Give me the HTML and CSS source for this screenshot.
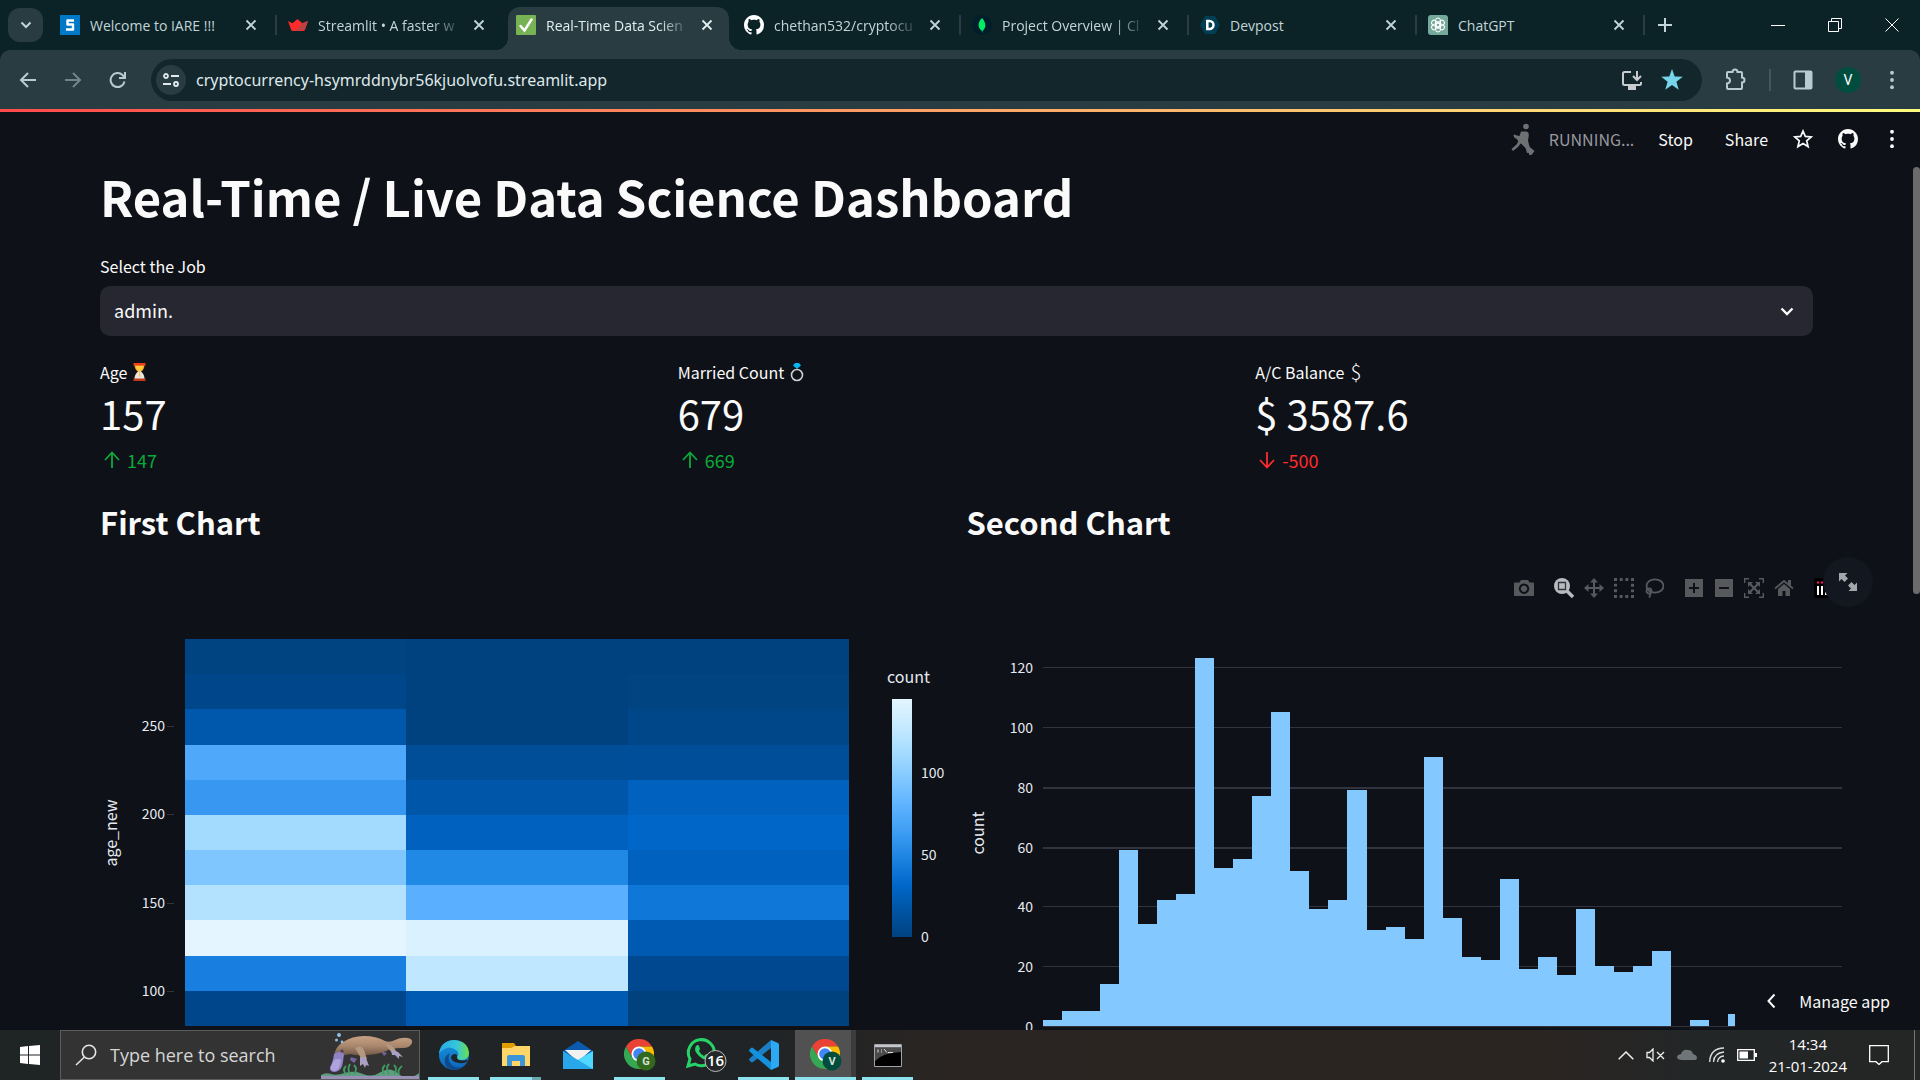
FILE: index.html
```
<!DOCTYPE html>
<html lang="en">
<head>
    <meta charset="UTF-8">
    <meta name="viewport" content="width=device-width, initial-scale=1.0">
    <title>Real-Time Data Science Dashboard</title>
    <link rel="stylesheet" href="styles.css">
</head>
<body>

    <svg class="defs" aria-hidden="true">
        <symbol id="close" viewBox="0 0 12 12"><path d="M1.5 1.5l9 9M10.5 1.5l-9 9" stroke="currentColor" stroke-width="1.8" fill="none"/></symbol>
        <symbol id="github" viewBox="0 0 16 16"><path fill="currentColor" d="M8 0C3.58 0 0 3.58 0 8c0 3.54 2.29 6.53 5.47 7.59.4.07.55-.17.55-.38 0-.19-.01-.82-.01-1.49-2.01.37-2.53-.49-2.69-.94-.09-.23-.48-.94-.82-1.13-.28-.15-.68-.52-.01-.53.63-.01 1.08.58 1.23.82.72 1.21 1.87.87 2.33.66.07-.52.28-.87.51-1.07-1.78-.2-3.64-.89-3.64-3.95 0-.87.31-1.59.82-2.15-.08-.2-.36-1.02.08-2.12 0 0 .67-.21 2.2.82.64-.18 1.32-.27 2-.27s1.36.09 2 .27c1.53-1.04 2.2-.82 2.2-.82.44 1.1.16 1.92.08 2.12.51.56.82 1.27.82 2.15 0 3.07-1.87 3.75-3.65 3.95.29.25.54.73.54 1.48 0 1.07-.01 1.93-.01 2.2 0 .21.15.46.55.38A8.01 8.01 0 0016 8c0-4.42-3.58-8-8-8z"/></symbol>
        <symbol id="dots" viewBox="0 0 20 20"><g fill="currentColor"><circle cx="10" cy="2" r="2.1"/><circle cx="10" cy="10" r="2.1"/><circle cx="10" cy="18" r="2.1"/></g></symbol>
        <symbol id="chrome" viewBox="0 0 30 30">
            <path fill="#ea4335" d="M15 15V7.5h13A15 15 0 0 0 2 7.5l6.5 11.2z"/>
            <path fill="#fbbc04" d="M28 7.5H15l6.5 11.3L15 30A15 15 0 0 0 28 7.5z"/>
            <path fill="#34a853" d="M2 7.5A15 15 0 0 0 15 30l6.5-11.3H8.5z"/>
            <circle cx="15" cy="15" r="7.5" fill="#fff"/><circle cx="15" cy="15" r="5.8" fill="#4285f4"/>
        </symbol>
        <symbol id="up" viewBox="0 0 18 18"><path d="M9 17V2M2 9l7-7.500 7 7.500" stroke="currentColor" stroke-width="1.8" fill="none"/></symbol>
    </svg>

    <!-- browser window -->
    <div class="tab-strip">
        <button class="tab-search" aria-label="Search tabs">
            <svg width="12" height="8" viewBox="0 0 12 8"><path d="M1.500 1.500L6 6l4.500-4.500" stroke="currentColor" stroke-width="2" fill="none"/></svg>
        </button>
        <div class="tabs">
            <div class="tab">
                <svg class="favicon" viewBox="0 0 20 20"><path fill="#0078c8" d="M0 0h20v20H0z"/><path d="M14 5.500H7.500v4h5.500v5H6" fill="none" stroke="#fff" stroke-width="2.400" stroke-linejoin="round"/></svg>
                <span class="tab-title">Welcome to IARE !!!</span>
                <button class="tab-close" aria-label="Close tab"><svg><use href="#close"/></svg></button>
            </div>
            <div class="tab">
                <svg class="favicon" viewBox="0 0 20 20"><path fill="#ff2b2b" d="M0 6l4.500 2.200 5-4.200 4.800 4.300L20 6l-3 8.500q-.5 1.500-2 1.500H5q-1.500 0-2-1.500z"/><path fill="#bd4043" d="M14.300 8.300L20 6l-3 8.500L10 16H7z"/></svg>
                <span class="tab-title faded">Streamlit • A faster w</span>
                <button class="tab-close" aria-label="Close tab"><svg><use href="#close"/></svg></button>
            </div>
            <div class="tab active">
                <svg class="favicon" viewBox="0 0 20 20"><rect width="20" height="20" rx="1" fill="#77b255"/><path d="M4.500 11l4 4.500L15.500 4.500" fill="none" stroke="#fff" stroke-width="2.500" stroke-linecap="round"/></svg>
                <span class="tab-title faded">Real-Time Data Scien</span>
                <button class="tab-close" aria-label="Close tab"><svg><use href="#close"/></svg></button>
            </div>
            <div class="tab">
                <svg class="favicon white"><use href="#github"/></svg>
                <span class="tab-title faded">chethan532/cryptocu</span>
                <button class="tab-close" aria-label="Close tab"><svg><use href="#close"/></svg></button>
            </div>
            <div class="tab">
                <svg class="favicon" viewBox="0 0 20 20"><circle cx="10" cy="10" r="10" fill="#001e2b"/><path fill="#00ed64" d="M10 3c-5 5-4 10 0 13v1.500h.4V16c4-3 4-8-.4-13z"/></svg>
                <span class="tab-title faded">Project Overview | Cl</span>
                <button class="tab-close" aria-label="Close tab"><svg><use href="#close"/></svg></button>
            </div>
            <div class="tab">
                <svg class="favicon" viewBox="0 0 20 20"><path fill="#003e54" d="M5 1h10l5 9-5 9H5l-5-9z"/><path d="M7.300 6h2.200a4 4 0 0 1 0 8H7.300z" fill="none" stroke="#fff" stroke-width="2.500"/></svg>
                <span class="tab-title">Devpost</span>
                <button class="tab-close" aria-label="Close tab"><svg><use href="#close"/></svg></button>
            </div>
            <div class="tab">
                <svg class="favicon" viewBox="0 0 20 20"><path fill="#75a99c" d="M3 0h14a3 3 0 0 1 3 3v17H3a3 3 0 0 1-3-3V3a3 3 0 0 1 3-3z"/><g fill="none" stroke="#fff" stroke-width="1"><rect id="petal" x="7.500" y="3" width="5" height="9" rx="2.500"/><use href="#petal" transform="rotate(60 10 10)"/><use href="#petal" transform="rotate(120 10 10)"/><use href="#petal" transform="rotate(180 10 10)"/><use href="#petal" transform="rotate(240 10 10)"/><use href="#petal" transform="rotate(300 10 10)"/></g></svg>
                <span class="tab-title">ChatGPT</span>
                <button class="tab-close" aria-label="Close tab"><svg><use href="#close"/></svg></button>
            </div>
            <button class="new-tab" aria-label="New tab"><svg width="14" height="14" viewBox="0 0 14 14"><path d="M7 0v14M0 7h14" stroke="currentColor" stroke-width="2"/></svg></button>
        </div>
        <div class="window-controls">
            <button aria-label="Minimize"><svg width="14" height="14" viewBox="0 0 14 14"><path d="M0 7.500h14" stroke="#fff"/></svg></button>
            <button aria-label="Restore"><svg width="14" height="14" viewBox="0 0 14 14"><path d="M.5 3.500h10v10H.5zM3.500 3V.500h10v10H11" stroke="#fff" fill="none"/></svg></button>
            <button aria-label="Close"><svg width="14" height="14" viewBox="0 0 14 14"><path d="M.5.500l13 13M13.500.500l-13 13" stroke="#fff"/></svg></button>
        </div>
    </div>

    <div class="toolbar">
        <div class="nav-buttons">
            <button aria-label="Back"><svg width="18" height="18" viewBox="0 0 18 18"><path d="M17 9H2.500M9 2L2 9l7 7" stroke="currentColor" stroke-width="2" fill="none"/></svg></button>
            <button aria-label="Forward" class="disabled"><svg width="18" height="18" viewBox="0 0 18 18"><path d="M1 9h14.500M9 2l7 7-7 7" stroke="currentColor" stroke-width="2" fill="none"/></svg></button>
            <button aria-label="Reload"><svg width="18" height="18" viewBox="0 0 18 18"><path d="M15.500 10.500A7 7 0 1 1 13.500 4L16 6.500M16 1v6H10" stroke="currentColor" stroke-width="2" fill="none"/></svg></button>
        </div>
        <div class="address-bar">
            <button class="site-info" aria-label="Site information"><svg width="16" height="16" viewBox="0 0 16 16"><g stroke="currentColor" stroke-width="1.800" fill="none"><circle cx="3" cy="4" r="2"/><path d="M8 4h8M0 12h8"/><circle cx="13" cy="12" r="2"/></g></svg></button>
            <input class="url" type="text" aria-label="Address" value="cryptocurrency-hsymrddnybr56kjuolvofu.streamlit.app">
            <button aria-label="Install app"><svg width="22" height="22" viewBox="0 0 22 22"><path d="M10 3H3.500Q2 3 2 4.500v10Q2 16 3.500 16h15q1.500 0 1.500-1.500V13M16 2v8M12 7l4 4 4-4" fill="none" stroke="#c7cdcf" stroke-width="2"/><path fill="#c7cdcf" d="M7 17h8v4H7z"/></svg></button>
            <button aria-label="Bookmark"><svg width="22" height="22" viewBox="0 0 22 22"><path fill="#76d5e8" d="M11 0l2.700 7.600 8.100.2-6.400 5 2.300 7.900L11 16.100l-6.700 4.600 2.300-7.900-6.400-5 8.100-.2z"/></svg></button>
        </div>
        <div class="browser-actions">
            <button aria-label="Extensions"><svg width="24" height="24" viewBox="0 0 24 24"><path d="M5 4h4.500a2.500 2.500 0 0 1 5 0H18q1 0 1 1v4.500a2.500 2.500 0 0 1 0 5V20q0 1-1 1H5q-1 0-1-1v-4.500q3-.3 3-3t-3-3V5q0-1 1-1z" fill="none" stroke="currentColor" stroke-width="2"/></svg></button>
            <span class="divider"></span>
            <button aria-label="Side panel"><svg width="20" height="20" viewBox="0 0 20 20"><rect x="1.500" y="1.500" width="17" height="17" rx="1" fill="none" stroke="currentColor" stroke-width="2"/><path d="M12 1h7v18h-7z" fill="currentColor"/></svg></button>
            <button aria-label="Profile"><span class="profile">V</span></button>
            <button aria-label="Chrome menu"><svg width="18" height="18"><use href="#dots"/></svg></button>
        </div>
    </div>

    <!-- streamlit page -->
    <div class="app">
        <div class="decoration"></div>
        <header class="app-header">
            <svg width="24" height="32" viewBox="0 0 24 32"><g fill="#6f7074"><circle cx="15" cy="3.500" r="2.800"/><path d="M10 8.500h5q3 0 2.800 4l-.8 5 1.500 6 .5 6-3 .5-2-7-4-3-3 4-5 4-1.500-2L6 21l2-5-5-1.500.500-2.500 5 1z"/></g><path d="M3 12l14 14" stroke="#6f7074" stroke-width="2"/><path d="M15 24l2-1.500 6.500 5.500-3 4h-2z" fill="#6f7074"/></svg>
            <span class="running">RUNNING...</span>
            <button>Stop</button>
            <button class="share">Share</button>
            <button aria-label="Favorite"><svg width="20" height="20" viewBox="0 0 20 20"><path d="M10 2l2.300 5.400 5.900.5-4.500 3.900 1.400 5.800L10 14.500l-5.100 3.100 1.400-5.800-4.500-3.900 5.900-.5z" fill="none" stroke="currentColor" stroke-width="1.700"/></svg></button>
            <button aria-label="View source"><svg width="20" height="20"><use href="#github"/></svg></button>
            <button aria-label="Main menu"><svg width="18" height="18"><use href="#dots"/></svg></button>
        </header>

        <main class="content">
            <h1>Real-Time / Live Data Science Dashboard</h1>

            <label class="select-label" for="job">Select the Job</label>
            <div class="select-box">
                <select id="job">
                    <option>admin.</option>
                    <option>technician</option>
                    <option>services</option>
                </select>
                <svg class="select-arrow" width="14" height="9" viewBox="0 0 14 9"><path d="M1.500 1.500L7 7l5.500-5.500" stroke="#fafafa" stroke-width="2.400" fill="none"/></svg>
            </div>

            <div class="metrics">
                <div class="metric">
                    <p class="metric-label">Age
                        <svg width="13" height="18" viewBox="0 0 13 18"><path fill="#f5a623" d="M1.500 2h10q0 4.500-4 7h-2q-4-2.500-4-7z"/><path fill="#ece5df" d="M5.500 8h2q4 3 4 8h-10q0-5 4-8z"/><path fill="#ffc83d" d="M2.500 3h8q-.5 3-3.300 5v6H6V8Q3 6 2.500 3z"/><path fill="#e8401c" d="M.5 0h12v2.500H.5z"/><path fill="#c33a17" d="M.5 15.500h12V18H.5z"/></svg>
                    </p>
                    <p class="metric-value">157</p>
                    <p class="metric-delta"><svg width="18" height="18"><use href="#up"/></svg>147</p>
                </div>
                <div class="metric">
                    <p class="metric-label">Married Count
                        <svg width="14" height="19" viewBox="0 0 14 19"><circle cx="7" cy="12" r="5.500" fill="none" stroke="#cfcfcf" stroke-width="1.600"/><path fill="#00b7f1" d="M5 0h4l2 2.500L7 6 3 2.500z"/></svg>
                    </p>
                    <p class="metric-value">679</p>
                    <p class="metric-delta"><svg width="18" height="18"><use href="#up"/></svg>669</p>
                </div>
                <div class="metric">
                    <p class="metric-label">A/C Balance <span class="dollar">$</span></p>
                    <p class="metric-value">$ 3587.6</p>
                    <p class="metric-delta down"><svg width="18" height="18"><use href="#up"/></svg>-500</p>
                </div>
            </div>

            <div class="charts">
                <section class="chart-col">
                    <h3>First Chart</h3>
                    <svg class="chart" id="heatmap" width="875" height="462" viewBox="0 0 875 462">
                        <linearGradient id="blues" x1="0" y1="0" x2="0" y2="1">
                            <stop offset="0" stop-color="#e4f5ff"/><stop offset=".11" stop-color="#c7ebff"/><stop offset=".22" stop-color="#a6dcff"/><stop offset=".33" stop-color="#83c9ff"/><stop offset=".44" stop-color="#60b4ff"/><stop offset=".56" stop-color="#3d9df3"/><stop offset=".67" stop-color="#1c83e1"/><stop offset=".78" stop-color="#0068c9"/><stop offset=".89" stop-color="#0054a3"/><stop offset="1" stop-color="#004280"/>
                        </linearGradient>
                        <rect x="792" y="132" width="20" height="238" fill="url(#blues)"/>
                        <text class="axis-title" x="787" y="116">count</text>
                        <text class="axis-title" text-anchor="middle" transform="translate(17 266) rotate(-90)">age_new</text>
                    </svg>
                </section>
                <section class="chart-col">
                    <h3>Second Chart</h3>
                    <svg class="chart" id="histogram" width="875" height="462" viewBox="0 0 875 462">
                        <text class="axis-title" text-anchor="middle" transform="translate(17 266) rotate(-90)">count</text>
                    </svg>
                    <div class="modebar">
                        <button aria-label="Download plot"><svg viewBox="0 0 20 20"><path fill-rule="evenodd" fill="currentColor" d="M1 4.500h4.500L7 2h7l1.500 2.500H19q1 0 1 1V17q0 1-1 1H1q-1 0-1-1V5.500q0-1 1-1zM10 5.500a5.200 5.200 0 1 0 .1 0zm0 2a3.200 3.200 0 1 1-.1 0z"/></svg></button>
                        <button aria-label="Zoom" class="group on"><svg viewBox="0 0 20 20"><circle cx="8" cy="8" r="8" fill="currentColor"/><path d="M12 12l7 7" stroke="currentColor" stroke-width="3.500"/><path d="M4.500 4.500h7v7h-7z" fill="none" stroke="#30333a" stroke-width="1.300"/></svg></button>
                        <button aria-label="Pan"><svg viewBox="0 0 20 20"><path d="M10 2v16M2 10h16" stroke="currentColor" stroke-width="2"/><path fill="currentColor" d="M10 0l4 4.500H6zM10 20l4-4.500H6zM0 10l4.500-4v8zM20 10l-4.500-4v8z"/></svg></button>
                        <button aria-label="Box select"><svg viewBox="0 0 20 20"><rect x="1.500" y="1.500" width="17" height="17" fill="none" stroke="currentColor" stroke-width="3" stroke-dasharray="2.900 2.767" stroke-dashoffset="1.400"/></svg></button>
                        <button aria-label="Lasso select"><svg viewBox="0 0 20 20"><g fill="none" stroke="currentColor" stroke-width="1.800"><ellipse cx="11" cy="8" rx="8.500" ry="6.700"/><circle cx="5" cy="13" r="2.500"/><path d="M6 15q1 2-1 4.500"/></g></svg></button>
                        <button aria-label="Zoom in" class="group"><svg viewBox="0 0 20 20"><path fill="currentColor" d="M1 1h18v18H1z"/><path d="M10 5v10M5 10h10" stroke="#0e1117" stroke-width="2"/></svg></button>
                        <button aria-label="Zoom out"><svg viewBox="0 0 20 20"><path fill="currentColor" d="M1 1h18v18H1z"/><path d="M5 10h10" stroke="#0e1117" stroke-width="2"/></svg></button>
                        <button aria-label="Autoscale"><svg viewBox="0 0 20 20"><path d="M.7 5V.7H5M15 .7h4.300V5M19.300 15v4.300H15M5 19.300H.7V15" fill="none" stroke="currentColor" stroke-width="1.400"/><path d="M5 5l10 10M15 5L5 15" stroke="currentColor" stroke-width="2"/><path fill="currentColor" d="M4 4h5L4 9zM16 4v5l-5-5zM16 16h-5l5-5zM4 16v-5l5 5z"/></svg></button>
                        <button aria-label="Reset axes"><svg viewBox="0 0 20 20"><path d="M1 10.500L10 3l9 7.500" fill="none" stroke="currentColor" stroke-width="1.800"/><path fill="currentColor" d="M14 2h3v6l-3-2.500zM4 11l6-5 6 5v7h-4.500v-5h-3v5H4z"/></svg></button>
                        <a class="group" href="#" aria-label="Produced with Plotly"><svg viewBox="0 0 20 20"><rect width="20" height="20" rx="2" fill="#000"/><g fill="#fff"><rect x="3" y="8" width="2" height="9"/><rect x="7" y="8" width="2" height="9"/><rect x="11" y="13" width="2" height="4"/></g><g fill="#e8195e"><circle cx="4" cy="4.500" r="1.200"/><circle cx="8" cy="4.500" r="1.200"/></g></svg></a>
                    </div>
                    <button class="fullscreen" aria-label="View fullscreen"><svg width="18" height="18" viewBox="0 0 18 18"><path fill="#a3a6ab" d="M0 0h8.500L6 2.500l3 3L5.500 9l-3-3L0 8.500zM18 18H9.500l2.500-2.500-3-3L12.500 9l3 3L18 9.500z"/></svg></button>
                </section>
            </div>
        </main>

        <div class="scrollbar"></div>
        <button class="manage-app"><svg width="9" height="16" viewBox="0 0 9 16"><path d="M7.500 1.500L1.500 8l6 6.500" stroke="currentColor" stroke-width="2" fill="none"/></svg>Manage app</button>
    </div>

    <!-- windows taskbar -->
    <footer class="taskbar">
        <button class="start" aria-label="Start"><svg width="20" height="20" viewBox="0 0 20 20"><path fill="#fff" d="M0 2l8-1v8.500H0zM9 .900L20 0v9.500H9zM0 10.500h8V19l-8-1zM9 10.500h11V20L9 19.100z"/></svg></button>
        <label class="search">
            <svg width="22" height="22" viewBox="0 0 22 22"><g stroke="#e6e6e6" stroke-width="1.600" fill="none"><circle cx="14" cy="8" r="6.700"/><path d="M9.500 13L1 21"/></g></svg>
            <input type="text" placeholder="Type here to search">
            <svg class="platypus" width="98" height="47" viewBox="0 0 98 47">
                <defs><linearGradient id="fur" x1="0" y1="0" x2="0" y2="1"><stop offset="0" stop-color="#c9a183"/><stop offset=".5" stop-color="#a9876d"/><stop offset="1" stop-color="#6e5645"/></linearGradient></defs>
                <path d="M0 43q5-3 10-1t14-1 18 1 18-2 18 2 20-1v6H0z" fill="#5f9c82"/><path d="M0 44h98v3H0z" fill="#9a8fb5"/>
                <g stroke="#3f9c61" stroke-width="1.800" fill="none"><path d="M25 42q-4-4 0-8M29 42q-3-5 0-10M33 42q4-5 0-9M63 42q-3-5 1-9M68 42q-4-6 0-10M73 42q4-5 0-9M78 42q-2-4 3-8"/></g>
                <path fill="#75629f" d="M30 25l6 2-3 4-4-3zM60 19l6 2-3 3z"/>
                <path fill="url(#fur)" d="M13 24q1-9 9-14 9-6 21-6 12 0 21 5 5 2 10-1 6-3 13-2 5 1 4 5-2 5-9 5-7 0-13 1-8 5-22 6-12 1-18-1-7 2-16 2z"/>
                <path fill="#8f82c6" d="M13 22q5-4 10 0l-1 8q-1 9-8 10-6 0-5-5 3-5 4-13z"/><path fill="#b0a3dc" d="M13 28q4-2 7 0-1 10-6 11-5 0-4-4z"/>
                <circle cx="21" cy="19" r="1.600" fill="#4d3e64"/>
                <path fill="#b59880" d="M34 16q6-4 9 2l3 9-6-1zM64 12q8 0 11 7l-4 2z"/>
                <path fill="#a9a0c4" d="M39 25l6 1 3 8-3-1-1 3-2-4-3 2zM70 17l7 3 5 5-4-1v3l-4-4h-3z"/>
                <g fill="#8fc0e8"><circle cx="18" cy="3" r="2"/><circle cx="15.500" cy="8" r="1.500"/><circle cx="21" cy="10" r="1.400"/></g>
            </svg>
        </label>
        <nav class="task-apps">
            <button class="open" aria-label="Edge"><svg width="30" height="30" viewBox="0 0 30 30"><defs><linearGradient id="edge-a"><stop offset="0" stop-color="#28a8ea"/><stop offset=".6" stop-color="#36c6d8"/><stop offset="1" stop-color="#6be04c"/></linearGradient><linearGradient id="edge-b" x1="0" y1="0" x2="0" y2="1"><stop offset="0" stop-color="#1b96dd"/><stop offset="1" stop-color="#0a65bd"/></linearGradient></defs><circle cx="15" cy="15" r="15" fill="url(#edge-b)"/><path fill="#114a8b" d="M10 15q-2 8 6 12 6 2 11-3-5 6-12 6Q4 28 6 18q1-3 5-5z"/><path fill="url(#edge-a)" d="M0 14Q1 1 15 0q14 1 15 13 0 6-7 7-6 0-5-3 3-4-1-7-7-5-13 0-3 2-4 4z"/><path fill="#212426" d="M18 17q0 5 10 3l1 1q-4 3-9 2-8-1-8-6 1-3 4-3 3 1 2 3z"/></svg></button>
            <button class="open stacked" aria-label="File Explorer"><svg width="28" height="24" viewBox="0 0 28 24"><path fill="#e09d00" d="M0 0h12l2 3v6H0z"/><path fill="#ffd667" d="M0 5h9l4-2h15v20H0z"/><path fill="#3d95d9" d="M5 23v-9q0-2 2-2h14q2 0 2 2v9h-5v-5h-8v5z"/></svg></button>
            <button aria-label="Mail"><svg width="30" height="28" viewBox="0 0 30 28"><path fill="#0a5bb0" d="M0 10L15 0l15 10v4H0z"/><path fill="#f1f1f1" d="M2 9h26l-13 12z"/><path fill="#28a8ea" d="M0 10l15 9 15-9v18H0z"/><path fill="#50d9ff" d="M30 10v18L15 19z"/></svg></button>
            <button class="open" aria-label="Chrome"><svg width="32" height="32" viewBox="0 0 32 32"><use href="#chrome" width="30" height="30"/><circle cx="22" cy="22" r="9.500" fill="#33691e"/><text class="badge-letter" x="22" y="26" text-anchor="middle">G</text></svg></button>
            <button class="badged" aria-label="WhatsApp"><svg width="42" height="34" viewBox="0 0 42 34"><path d="M3 28l2-7a13 13 0 1 1 5 5z" fill="none" stroke="#25d366" stroke-width="3"/><path fill="#25d366" d="M11 8q2-2 3 0l1 3-1 2q2 4 5 5l2-2 4 2q1 2-1 3-5 2-10-3-6-6-3-10z"/><circle cx="30.500" cy="23" r="10.500" fill="#242728" stroke="#bbb"/><text class="badge-count" x="30.500" y="28" text-anchor="middle">16</text></svg></button>
            <button class="open" aria-label="VS Code"><svg width="30" height="30" viewBox="0 0 30 30"><path fill="#1a7fc4" d="M22 8L4 22q-1 .8-2 0l-1.500-1.500q-.8-1 0-2L22 0z"/><path fill="#1391dc" d="M22 22L4 8Q3 7.200 2 8L.5 9.500q-.8 1 0 2L22 30z"/><path fill="#2ba9f2" d="M22 0l7 3q1 .5 1 2v20q0 1.500-1 2l-7 3z"/></svg></button>
            <button class="open current" aria-label="Chrome"><svg width="32" height="32" viewBox="0 0 32 32"><use href="#chrome" width="30" height="30"/><circle cx="22" cy="22" r="9.500" fill="#004d40"/><text class="badge-letter" x="22" y="26" text-anchor="middle">V</text></svg></button>
            <button class="open" aria-label="Command Prompt"><svg width="28" height="23" viewBox="0 0 28 23"><path fill="#000" stroke="#a0a4a8" d="M.5.500h27v22H.5z"/><path fill="#c4c8cc" d="M1 1h26v2.500H1z"/><path fill="#4a4a4a" d="M1 4h26v4Q8 9 1 17z"/><path d="M4 5.500v3M7 6h1M7 8h1M10 5l3 3.500M14 8.500h5" stroke="#ddd"/></svg></button>
        </nav>
        <div class="tray">
            <svg width="16" height="9" viewBox="0 0 16 9"><path d="M.7 8.300L8 1l7.300 7.300" stroke="#eee" stroke-width="1.500" fill="none"/></svg>
            <svg width="19" height="14" viewBox="0 0 19 14"><path d="M1 4.500h2.500L7 1v12L3.500 9.500H1zM11 4l7 7M18 4l-7 7" stroke="#eee" stroke-width="1.300" fill="none"/></svg>
            <svg width="20" height="12" viewBox="0 0 20 12"><path fill="#70757a" d="M5 11q-5 0-5-3.500Q1 5 4 5q2-5 7-4 4 0 5 4 4 1 4 4 0 2-2 2z"/></svg>
            <svg width="16" height="16" viewBox="0 0 16 16"><g stroke="#ddd" stroke-width="1.300" fill="none"><path d="M.7 15Q1 1.500 15 1"/><path d="M4.500 15Q5 6 15 5"/><path d="M8.500 15Q9 9.500 15 9"/></g><circle cx="14" cy="14" r="1.800" fill="#fff"/></svg>
            <svg width="20" height="12" viewBox="0 0 20 12"><path d="M.7.700h16.600v10.600H.7z" stroke="#fff" stroke-width="1.300" fill="none"/><path fill="#fff" d="M2.500 2.500h8.500v7H2.500zM18 4h2v4h-2z"/></svg>
            <div class="clock"><time>14:34</time><time>21-01-2024</time></div>
            <svg class="notifications" width="20" height="20" viewBox="0 0 20 20"><path d="M.7.700h18.600v16H13l-3 2.800-3-2.800H.7z" stroke="#fff" stroke-width="1.300" fill="none"/></svg>
        </div>
    </footer>

    <script src="charts.js"></script>
</body>
</html>
```
FILE: styles.css
```
* {
    box-sizing: border-box;
}
body {
    margin: 0;
    height: 100vh;
    display: flex;
    flex-direction: column;
    overflow: hidden;
    background: #0e1117;
    color: #fafafa;
    font-family: "Noto Sans CJK JP", "Noto Sans", sans-serif;
}
button {
    display: flex;
    align-items: center;
    justify-content: center;
    padding: 0;
    border: 0;
    background: none;
    color: inherit;
    font: inherit;
}
svg {
    display: block;
    flex: none;
}
.defs {
    position: absolute;
    width: 0;
    height: 0;
}

/* browser tabs, the strip runs on behind the toolbar's round corners */
.tab-strip {
    display: flex;
    flex: none;
    height: 60px;
    margin-bottom: -10px;
    padding: 0 0 10px 8px;
    background: #0b2327;
    color: #c3d4d8;
    font-family: "Open Sans", sans-serif;
    font-size: 14px;
}
.tab-search {
    width: 35px;
    height: 34px;
    margin: 8px 6px 0 0;
    border-radius: 12px;
    background: #293c42;
}
.tabs {
    display: flex;
    flex: 1;
    min-width: 0;
}
.tab {
    position: relative;
    z-index: 0;
    display: flex;
    align-items: center;
    gap: 10px;
    flex: 0 1 228px;
    min-width: 0;
    padding: 0 20px 0 11px;
}
.tab::after {
    content: "";
    position: absolute;
    right: 0;
    top: 15px;
    width: 2px;
    height: 20px;
    background: #293c42;
}
.tab.active {
    color: #e3eef0;
}
.tab.active::before {
    content: "";
    position: absolute;
    z-index: -1;
    inset: 7px 4px 0 3px;
    border-radius: 12px 12px 0 0;
    background: #293c42;
}
.tab.active::after {
    z-index: -1;
    top: auto;
    bottom: 0;
    left: -9px;
    right: -8px;
    width: auto;
    height: 12px;
    background:
        radial-gradient(circle at 0 0, transparent 12px, #293c42 12px) left / 12px 12px no-repeat,
        radial-gradient(circle at 100% 0, transparent 12px, #293c42 12px) right / 12px 12px no-repeat;
}
.tab:has(+ .active)::after {
    display: none;
}
.favicon {
    width: 20px;
    height: 20px;
}
.favicon.white {
    color: #fff;
}
.tab-title {
    flex: 1;
    white-space: nowrap;
}
.tab-title.faded {
    mask-image: linear-gradient(to right, #000 78%, transparent);
}
.tab-close svg {
    width: 12px;
    height: 12px;
}
.new-tab {
    width: 40px;
}
.window-controls {
    display: flex;
}
.window-controls button {
    width: 57px;
}

/* browser toolbar */
.toolbar {
    position: relative;
    display: flex;
    flex: none;
    align-items: center;
    gap: 21px;
    height: 59px;
    padding: 0 19px;
    border-radius: 10px 10px 0 0;
    background: #293c42;
    color: #b7ccd1;
}
.nav-buttons {
    display: flex;
    gap: 27px;
}
.disabled {
    opacity: .5;
}
.address-bar {
    display: flex;
    flex: 1;
    align-items: center;
    gap: 18px;
    height: 42px;
    margin-left: 3px;
    padding: 0 19px 0 5px;
    border-radius: 21px;
    background: #13262c;
}
.site-info {
    width: 30px;
    height: 30px;
    border-radius: 50%;
    background: #293c42;
    color: #e0eaec;
}
.url {
    flex: 1;
    min-width: 0;
    margin-left: -8px;
    padding: 0;
    border: 0;
    background: none;
    color: #dfe9eb;
    font: 16px/24px "Noto Sans", sans-serif;
}
.browser-actions {
    display: flex;
    align-items: center;
    gap: 22px;
}
.divider {
    width: 2px;
    height: 22px;
    background: #44575d;
}
.profile {
    width: 26px;
    height: 26px;
    border-radius: 50%;
    background: #004d40;
    color: #fff;
    font: 14px/26px Roboto, sans-serif;
}

/* streamlit app */
.app {
    position: relative;
    flex: 1;
    min-height: 0;
    overflow: hidden;
}
.decoration {
    height: 3px;
    background: linear-gradient(to right, #ff4b4b, #fffd80);
}
.app-header {
    display: flex;
    align-items: center;
    justify-content: flex-end;
    gap: 25px;
    height: 55px;
    padding: 0 19px 2px 0;
    font-size: 16px;
    line-height: 24px;
}
.running {
    margin: 0 -1px 0 -11px;
    color: #9899a0;
}
.share {
    margin-left: 7px;
}
.content {
    padding: 0 107px 0 100px;
}
h1, h3, p {
    margin: 0;
}
h1 {
    font-size: 49px;
    font-weight: 700;
    line-height: 58px;
}
.select-label {
    display: block;
    margin: 30px 0 9px;
    font-size: 16px;
    line-height: 22px;
}
.select-box {
    position: relative;
}
select {
    display: block;
    appearance: none;
    width: 100%;
    height: 50px;
    padding: 0 14px 2px;
    border: 0;
    border-radius: 10px;
    background: #262730;
    color: #fafafa;
    font-family: inherit;
    font-size: 18px;
}
.select-arrow {
    position: absolute;
    right: 19px;
    top: 21px;
    pointer-events: none;
}
.metrics {
    display: grid;
    grid-template-columns: repeat(3, 1fr);
    gap: 20px;
    margin-top: 25px;
}
.metric-label {
    display: flex;
    align-items: center;
    gap: 6px;
    font-size: 16px;
    line-height: 22px;
}
.dollar {
    font-size: 20px;
    font-weight: 300;
}
.metric-value {
    margin-top: 3px;
    font-size: 40px;
    line-height: 54px;
}
.metric-delta {
    display: flex;
    align-items: center;
    gap: 6px;
    margin: 8px 0 0 3px;
    color: #09ab3b;
    font-size: 18px;
    line-height: 24px;
}
.metric-delta.down {
    color: #ff2b2b;
}
.down svg {
    transform: scaleY(-1);
}
.charts {
    display: grid;
    grid-template-columns: repeat(2, minmax(0, 1fr));
    gap: 20px;
    margin-top: 29px;
}
.chart-col {
    position: relative;
}
h3 {
    font-size: 31px;
    font-weight: 600;
    line-height: 42px;
}
.chart {
    margin-top: 24px;
    overflow: visible;
}
.chart text {
    fill: #e6eaf1;
    font-size: 14px;
}
.chart .axis-title {
    font-size: 16px;
}
.modebar {
    position: absolute;
    top: 77px;
    right: -21px;
    display: flex;
    gap: 10px;
    color: #57595d;
}
.modebar svg {
    width: 20px;
    height: 20px;
}
.modebar .group {
    margin-left: 10px;
}
.modebar .on {
    color: #b9bbbe;
}
.fullscreen {
    position: absolute;
    top: 56px;
    right: -60px;
    width: 50px;
    height: 50px;
    border-radius: 50%;
    background: #13171f;
}
.scrollbar {
    position: absolute;
    top: 58px;
    right: 0;
    width: 7px;
    height: 427px;
    border-radius: 4px;
    background: #6b6b6b;
}
.manage-app {
    position: absolute;
    right: 0;
    bottom: 0;
    gap: 23px;
    height: 56px;
    padding: 0 30px 2px 32px;
    background: #0e1117;
    font-size: 16px;
}

/* taskbar */
.taskbar {
    display: flex;
    flex: none;
    height: 50px;
    background: linear-gradient(to right, #1f2425, #212426 40%, #2a2522 50%, #2b2522 80%, #232627 88%, #242625);
    color: #fff;
    font-family: "Open Sans", sans-serif;
}
.start {
    width: 60px;
}
.search {
    display: flex;
    align-items: center;
    gap: 13px;
    width: 360px;
    padding-left: 14px;
    border: 1px solid #5c5c5c;
    background: #333;
}
.search input {
    flex: 1;
    min-width: 0;
    padding: 0;
    border: 0;
    background: none;
    color: #fff;
    font: 18px/24px "Open Sans", sans-serif;
}
.search input::placeholder {
    color: #d6d6d6;
    opacity: 1;
}
.platypus {
    align-self: flex-end;
}
.task-apps {
    display: flex;
    gap: 11px;
    margin-left: 8px;
}
.task-apps button {
    width: 51px;
}
.task-apps .open {
    padding-top: 3px;
    border-bottom: 3px solid #8ce3ee;
}
.task-apps .stacked {
    border-image: linear-gradient(to right, #8ce3ee 79%, #6aa8b1 79%) 3;
}
.task-apps .badged {
    justify-content: flex-end;
}
.task-apps .current {
    width: 61px;
    margin: 0 -5px;
    background: linear-gradient(to right, #515151 92%, #3c3c3c 92%);
}
.badge-letter {
    fill: #d6e0d4;
    font: 700 11px Roboto, sans-serif;
}
.badge-count {
    fill: #fff;
    font: 600 15px "Open Sans", sans-serif;
}
.tray {
    display: flex;
    align-items: center;
    gap: 12px;
    margin-left: auto;
    margin-right: 5px;
    padding-right: 25px;
    border-right: 1px solid #777;
}
.clock {
    display: flex;
    flex-direction: column;
    align-items: center;
    font-size: 15px;
    line-height: 22px;
}
.notifications {
    margin-left: 10px;
}
```
FILE: charts.js
```
const NS = 'http://www.w3.org/2000/svg';

function add(parent, tag, attrs, text) {
    const el = document.createElementNS(NS, tag);
    for (const key in attrs) el.setAttribute(key, attrs[key]);
    if (text !== undefined) el.textContent = text;
    parent.appendChild(el);
}

// one row per 20 years of age_new, top row first
const heat = [
    ['#004482', '#00427f', '#004280'],
    ['#00468a', '#00427f', '#004482'],
    ['#0058ac', '#00427f', '#004789'],
    ['#50a8fb', '#004e98', '#004e99'],
    ['#3897f0', '#0057aa', '#0061be'],
    ['#a3dbff', '#0061be', '#0066c8'],
    ['#7fc6ff', '#2088e5', '#0061be'],
    ['#b3e2ff', '#5aafff', '#0f77d8'],
    ['#e4f5ff', '#daf1ff', '#005ab2'],
    ['#187ee0', '#bfe7ff', '#004990'],
    ['#00468a', '#005ab1', '#00427d']
];
const rows = [72, 107, 142, 178, 213, 248, 283, 318, 353, 389, 424, 459];
const cols = [85, 306, 528, 749];
const heatmap = document.getElementById('heatmap');

heat.forEach((row, r) => row.forEach((fill, c) => {
    add(heatmap, 'rect', { x: cols[c], y: rows[r], width: cols[c + 1] - cols[c], height: rows[r + 1] - rows[r], fill });
}));
[[250, 159], [200, 247], [150, 336], [100, 424]].forEach(([label, y]) => {
    add(heatmap, 'text', { x: 65, y: y + 5, 'text-anchor': 'end' }, label);
    add(heatmap, 'rect', { x: 67, y, width: 7, height: 1, fill: '#31333f' });
});
[[100, 206], [50, 288], [0, 370]].forEach(([label, y]) => {
    add(heatmap, 'text', { x: 821, y: y + 5 }, label);
});

// age_new histogram
const counts = [2, 5, 5, 14, 59, 34, 42, 44, 123, 53, 56, 77, 105, 52, 39, 42, 79, 32, 33, 29, 90, 36,
    23, 22, 49, 19, 23, 17, 39, 20, 18, 20, 25, 0, 2, 0, 4];
const histogram = document.getElementById('histogram');
const zero = 459;
const unit = 2.99;
const barWidth = 19.03;

for (let v = 0; v <= 120; v += 20) {
    const y = Math.round(zero - v * unit);
    add(histogram, 'rect', { x: 76, y, width: 799, height: v === 60 || v === 80 ? 2 : 1, fill: '#31333f' });
    add(histogram, 'text', { x: 66, y: y + 6, 'text-anchor': 'end' }, v);
}
counts.forEach((n, i) => {
    const x = Math.round(76 + i * barWidth);
    const right = Math.round(76 + (i + 1) * barWidth);
    const h = Math.round(n * unit);
    add(histogram, 'rect', { x, y: zero - h, width: right - x, height: h, fill: '#83c9ff' });
});
```
